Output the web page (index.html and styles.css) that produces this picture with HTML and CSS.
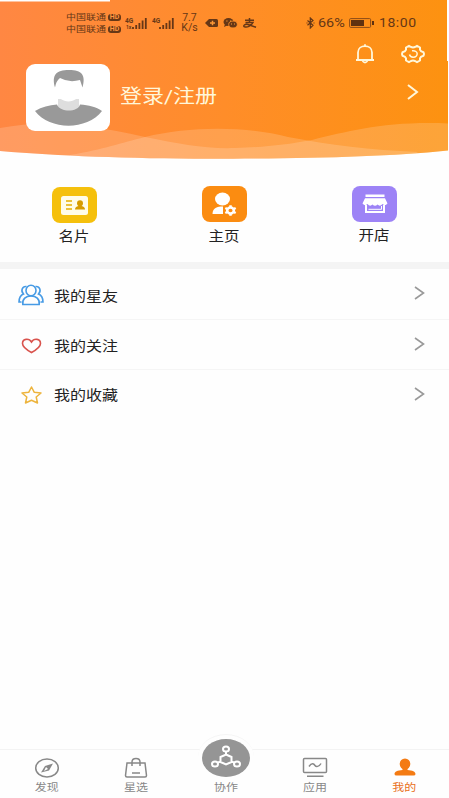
FILE: index.html
```html
<!DOCTYPE html>
<html lang="zh-CN">
<head>
<meta charset="utf-8">
<title>我的</title>
<link rel="stylesheet" href="styles.css">
</head>
<body>
<div class="app">
  <header class="hero">
    <svg class="hero-bg" width="449" height="162" viewBox="0 0 449 162">
      <defs>
        <linearGradient id="g" x1="0" y1="0" x2="1" y2="0"><stop offset="0" stop-color="#ff8743"/><stop offset=".5" stop-color="#ff8d29"/><stop offset="1" stop-color="#fd9210"/></linearGradient>
        <clipPath id="c"><path d="M0 1.500H110V0H447V61H448V150.500C385 157 310 158.500 210 158.800C125 158.500 60 156 0 151Z"/></clipPath>
      </defs>
      <g clip-path="url(#c)">
        <path fill="url(#g)" d="M0 0H449V162H0Z"/>
        <path fill="#fff" fill-opacity=".17" d="M0 128C40 121 80 122 145 137C180 144 205 149 235 148C265 147 285 145 312 140C350 131 385 121 449 123.500V162H0Z"/>
        <path fill="#fff" fill-opacity=".17" d="M70 155C105 149 120 143 145 137C190 126 245 126 288 137C330 145 370 150 418 152L400 162H70Z"/>
      </g>
    </svg>
    <div class="status">
      <div class="carriers">
        <div class="carrier"><span>中国联通</span><b>HD</b></div>
        <div class="carrier"><span>中国联通</span><b>HD</b></div>
      </div>
      <svg class="signal" width="23" height="13" viewBox="0 0 23 13"><text x="0" y="5.500">4G</text><text class="tiny" x="1" y="11.800">1x</text><path d="M8 12v-2M11.200 12V8M14.400 12V6M17.600 12V3.500M20.800 12V1"/></svg>
      <svg class="signal second" width="23" height="13" viewBox="0 0 23 13"><text x="0" y="5.500">4G</text><path d="M8 12v-2M11.200 12V8M14.400 12V6M17.600 12V3.500M20.800 12V1"/></svg>
      <div class="speed"><span>7.7</span><span>K/s</span></div>
      <svg class="notices" width="52" height="12" viewBox="0 0 52 12">
        <path fill="#663716" d="M4 2H11.500Q13 2 13 3.500V8.500Q13 10 11.500 10H4L0 6Z"/><path stroke="#ff9935" stroke-width="1.500" d="M5 6h5M7.500 3.800v4.400"/>
        <ellipse cx="23.500" cy="5" rx="5" ry="4" fill="#663716"/><path fill="#663716" d="M20 7l-1 3 4-2z"/><ellipse cx="28" cy="7.500" rx="4.300" ry="3.400" fill="#663716" stroke="#ff9129" stroke-width=".8"/><path stroke="#ff9935" stroke-width="1.200" d="M21.300 4h1.200M25 4h1.200M26 7h1M29 7h1"/>
        <path fill="none" stroke="#663716" stroke-width="1.500" d="M40 3.200h9M44.500 1v4.500M40.500 5.500h7.500C46 9.500 42 10.500 39.500 9.800C37.500 9 40 6.500 43 7.500L51 10.300"/>
      </svg>
      <svg class="bt" width="9" height="12" viewBox="0 0 9 12"><path fill="none" stroke="#663716" stroke-width="1.200" d="M1.500 3.500L7 8.300L4.300 11V1L7 3.500L1.500 8.300M.5 6h1M7.500 6h1"/></svg>
      <span class="percent">66%</span>
      <svg class="battery" width="26" height="10" viewBox="0 0 26 10"><rect x=".6" y=".6" width="21" height="8.800" rx="1" fill="none" stroke="#8a4b18"/><path fill="#5f3210" d="M2 2H15V8H2ZM23 3h2v4h-2z"/></svg>
      <span class="clock">18:00</span>
    </div>
    <div class="tools">
      <svg width="20" height="20" viewBox="0 0 20 20"><path fill="none" stroke="#fff7da" stroke-width="1.800" d="M1 16H19M3 16V8.500C3 0 17 0 17 8.500V16M10 2V.3M7.500 17Q10 20 12.500 17"/></svg>
      <svg width="24" height="20" viewBox="0 0 24 20"><path fill="none" stroke="#fff7da" stroke-width="2" stroke-linejoin="round" d="M8 1.800L10 3Q12 3.800 14 3L16 1.800L19 3.500V5.700Q19.500 7.500 22.500 8.300L23 10L22.500 11.700Q19.500 12.500 19 14.300V16.500L16 18.200L14 17Q12 16.200 10 17L8 18.200L5 16.500V14.300Q4.500 12.500 1.500 11.700L1 10L1.500 8.300Q4.500 7.500 5 5.700V3.500Z"/><path fill="none" stroke="#fff7da" stroke-width="1.500" d="M11 6.800C18 6 17.500 13.500 12 13.200Q9 13 8.500 10.500"/></svg>
    </div>
    <div class="profile">
      <div class="avatar"><svg width="84" height="67" viewBox="0 0 84 67">
        <path fill="#dedede" d="M32 35H53V47Q42 53 32 47Z"/>
        <path fill="#999" d="M9 47C16 43 23 41 31 40.500C34 48.500 52 48.500 54 40.500C63 41 70 43 76 47C61 66.500 24 66.500 9 47Z"/>
        <path fill="#fff" d="M28.500 21H56.500C58 21 57.500 27 55.500 28C53 34 48 37.500 42.500 37.500C37 37.500 32 34 29.500 28C27.500 27 27 21 28.500 21Z"/><path fill="#fff" d="M30 13H55V25H30Z"/>
        <path fill="#999" d="M29 23.500C25.500 11 30 6 43 6C56 6 60 11 56.500 23.500L54 16Q43 19 34 14Q30 17 29 23.500Z"/>
      </svg></div>
      <span class="login">登录/注册</span>
      <svg class="go" width="12" height="16" viewBox="0 0 12 16"><path fill="none" stroke="#fff7da" stroke-width="2" d="M1 1L10 8L1 15"/></svg>
    </div>
  </header>

  <section class="shortcuts">
    <div class="shortcut">
      <div class="tile yellow"><svg width="45" height="36" viewBox="0 0 45 36"><rect x="9" y="9" width="27" height="19" rx="2.500" fill="#fffce8"/><path stroke="#e6ae00" stroke-width="1.300" d="M14 14h6M14 18h6M14 22h6"/><circle cx="28" cy="16.200" r="3" fill="#d79c00"/><path fill="#d79c00" d="M23 22.500Q23 19.500 26.500 19V18h3v1Q33 19.500 33 22.500Z"/></svg></div>
      <span>名片</span>
    </div>
    <div class="shortcut">
      <div class="tile orange"><svg width="45" height="36" viewBox="0 0 45 36"><ellipse cx="20.500" cy="13" rx="7.500" ry="6.500" fill="#fff"/><path fill="#fff" d="M10.500 28C10.500 22 15 20.500 21 20.500V28Z"/><ellipse cx="28.500" cy="24.500" rx="3.300" ry="3" fill="none" stroke="#fff" stroke-width="2.500"/><path stroke="#fff" stroke-width="2.500" d="M28.500 19.300v2M28.500 27.700v2M23.300 22l2 1M31.700 26l2 1M23.300 27l2-1M31.700 23l2-1"/></svg></div>
      <span>主页</span>
    </div>
    <div class="shortcut">
      <div class="tile purple"><svg width="45" height="36" viewBox="0 0 45 36"><path fill="#fff" d="M13.500 8.500H32.500V11H13.500ZM13 12.200H33L35.500 17.500Q33 20.500 30.500 18Q28 21 25.500 18.500Q23 21 20.500 18.500Q18 21 15.500 18Q13 20.500 10.500 17.500Z"/><path fill="none" stroke="#fff" stroke-width="2" d="M14 19V26H32V19"/><path fill="none" stroke="#fff" stroke-width="1" d="M16.500 23.300H29.500V20"/></svg></div>
      <span>开店</span>
    </div>
  </section>

  <main class="menu">
    <div class="row">
      <svg class="lead" width="26" height="22" viewBox="0 0 26 22"><g fill="none" stroke="#479be5" stroke-width="1.600"><ellipse cx="13" cy="6.500" rx="5" ry="5.300"/><path d="M4.800 20.500C4 15 8 12 13 12S22 15 21.200 20.500ZM8.500 2.500C4 2 2.500 7 5.500 10C2 11.500 1 14 1 18H3.500M17.500 2.500C22 2 23.500 7 20.500 10C24 11.500 25 14 25 18H22.500"/></g></svg>
      <span>我的星友</span><svg class="arrow" width="11" height="14" viewBox="0 0 11 14"><path d="M1 1L9.500 7L1 13"/></svg>
    </div>
    <div class="row">
      <svg class="lead" width="26" height="22" viewBox="0 0 26 22"><path fill="none" stroke="#d9534d" stroke-width="1.600" d="M13.500 17.500C8 14.500 4.500 12 4.500 8.500C4.500 3.500 11 3 13.500 7C16 3 22.500 3.500 22.500 8.500C22.500 12 19 14.500 13.500 17.500Z"/></svg>
      <span>我的关注</span><svg class="arrow" width="11" height="14" viewBox="0 0 11 14"><path d="M1 1L9.500 7L1 13"/></svg>
    </div>
    <div class="row">
      <svg class="lead" width="26" height="22" viewBox="0 0 26 22"><path fill="none" stroke="#edb43d" stroke-width="1.500" stroke-linejoin="round" d="M13.500 2L16.300 7.300L23 8L18.200 12L19.500 18L13.500 15.200L7.500 18L8.800 12L4 8L10.700 7.300Z"/></svg>
      <span>我的收藏</span><svg class="arrow" width="11" height="14" viewBox="0 0 11 14"><path d="M1 1L9.500 7L1 13"/></svg>
    </div>
  </main>

  <nav class="tabs">
    <div class="tab"><svg width="26" height="22" viewBox="0 0 26 22"><ellipse cx="13" cy="11" rx="11.300" ry="9" fill="none" stroke="#888" stroke-width="1.500"/><path fill="#888" d="M19 6.500L15 13.500L7 15.500L11 9Z"/><path fill="#fff" d="M12 10l2 2-4 2z"/></svg><span>发现</span></div>
    <div class="tab"><svg width="26" height="22" viewBox="0 0 26 22"><g fill="none" stroke="#888" stroke-width="1.500"><path d="M4 6H22L23.500 18.500Q23.500 20 22 20H4Q2.500 20 2.500 18.500ZM9 9V5Q9 1.500 13 1.500T17 5V9M9 16h8"/></g></svg><span>星选</span></div>
    <div class="tab center"><div class="hub"><svg width="48" height="38" viewBox="0 0 48 38"><g fill="none" stroke="#fff" stroke-width="2"><path d="M24 15.500L29.500 18V23L24 25.500L18.500 23V18ZM24 12.500V15.500M18.500 22L15.500 24M29.500 22L32.500 24"/><ellipse cx="24" cy="10" rx="3" ry="2.500"/><ellipse cx="13" cy="25" rx="3" ry="2.500"/><ellipse cx="35" cy="25" rx="3" ry="2.500"/></g></svg></div><span>协作</span></div>
    <div class="tab"><svg width="26" height="22" viewBox="0 0 26 22"><g fill="none" stroke="#888" stroke-width="1.500"><rect x="1.500" y="1.500" width="23" height="14" rx="1"/><path d="M5 19.300H21.500M7 9.500C10 5 12 7 13 8.500S17 10 19 6.500"/></g></svg><span>应用</span></div>
    <div class="tab active"><svg width="26" height="22" viewBox="0 0 26 22"><ellipse cx="13" cy="7" rx="5.300" ry="5.500" fill="#f47b13"/><path fill="#f47b13" d="M10.500 11H15.500V13C20.500 13.500 23.500 14.500 23.500 17Q23.500 18.500 21.500 18.500H4.500Q2.500 18.500 2.500 17C2.500 14.500 5.500 13.500 10.500 13Z"/></svg><span>我的</span></div>
  </nav>
</div>
</body>
</html>
```
FILE: styles.css
```css
* { box-sizing: border-box; }
body { margin: 0; background: #fefefe; font-family: Roboto, "Noto Sans CJK SC", sans-serif; color: #222; }
.app { width: 449px; height: 798px; display: flex; flex-direction: column; overflow: hidden; }
svg { display: block; flex: none; }

.hero { position: relative; height: 162px; flex: none; }
.hero-bg { position: absolute; left: 0; top: 0; z-index: -1; }
.status { height: 44px; display: flex; align-items: center; padding: 2px 0 0 66px; color: #663716; white-space: nowrap; }
.carriers { width: 55px; margin-right: 4px; padding-top: 1px; }
.carrier { height: 12px; display: flex; align-items: center; font-size: 10px; line-height: 12px; }
.carrier span { width: 40px; transform: scaleY(.8); }
.carrier b { margin-left: 2px; width: 13px; height: 7px; border-radius: 3px; background: #663716; color: #ff9740; font-size: 7px; line-height: 7px; text-align: center; }
.signal { margin-right: 4px; }
.signal path { stroke: #663716; stroke-width: 1.8; }
.signal text { font-size: 6.5px; font-weight: 700; fill: #663716; }
.signal .tiny { font-size: 5px; }
.speed { width: 19px; margin-left: 1px; display: flex; flex-direction: column; align-items: center; font-size: 10px; line-height: 10px; }
.speed { transform: scaleX(1.05); }
.notices { margin-left: 6px; }
.bt { margin-left: 49px; }
.percent, .clock { font-size: 14px; line-height: 16px; transform: scaleY(.85); }
.percent { width: 27px; margin-left: 3px; }
.percent { transform: scale(1.03, .85); transform-origin: left center; }
.battery { margin-left: 4px; }
.clock { margin-left: 4px; letter-spacing: .55px; }
.tools { height: 20px; display: flex; justify-content: flex-end; gap: 26px; padding-right: 24px; }
.tools svg { width: auto; }
.profile { display: flex; align-items: center; padding: 0 30px 0 26px; }
.avatar { width: 84px; height: 67px; border-radius: 9px; background: #fff; overflow: hidden; }
.login { margin-left: 10px; margin-top: -2px; color: #fff7da; font-size: 22px; line-height: 28px; transform: scaleY(.86); }
.go { margin: -11px 0 0 auto; }

.shortcuts { height: 100px; flex: none; display: grid; grid-template-columns: repeat(3, 150px); padding-top: 25px; margin-left: -1px; }
.shortcut { display: flex; flex-direction: column; align-items: center; }
.tile { width: 45px; height: 36px; border-radius: 8px; }
.yellow { background: #f5c00c; }
.orange { background: #fb8c11; }
.purple { background: #9d83f6; }
.shortcut:nth-child(n + 2) { margin-top: -1px; }
.shortcut span { margin-top: 3px; font-size: 15.5px; line-height: 22px; transform: scaleY(.86); }
.shortcut:nth-child(2) span { margin-top: 4px; }

.menu { flex: 1; border-top: 7px solid #f4f4f4; }
.row { height: 50.5px; display: flex; align-items: center; padding: 2px 24px 0 18px; border-bottom: 1px solid #f5f5f5; font-size: 16px; }
.row:last-child { border: 0; height: 49px; }
.row span { margin-left: 10px; line-height: 22px; transform: translateY(1.5px) scaleY(.86); }
.row:last-child span { transform: scaleY(.86); }
.lead { margin-top: 1px; }
.arrow { margin-left: auto; margin-top: -3px; }
.arrow path { fill: none; stroke: #999; stroke-width: 1.6; }

.tabs { height: 49px; display: grid; grid-template-columns: repeat(5, 1fr); border-top: 1px solid #f3f3f3; padding: 7px 0 0 2px; color: #888; }
.tab { display: flex; flex-direction: column; align-items: center; font-size: 12px; line-height: 16px; }
.tab > span { transform: scaleY(.88); margin-top: 0; }
.center { margin-top: -21px; padding-left: 1px; }
.hub { width: 56px; height: 46px; margin-top: -2px; padding: 4px; border-radius: 50%; background: #fefefe; border-top: 1px solid #f5f5f5; }
.hub svg { border-radius: 50%; background: #959595; }
.center > span { margin-top: -1px; }
.active { color: #e9701a; }
.active svg { margin-left: 2px; }
```
